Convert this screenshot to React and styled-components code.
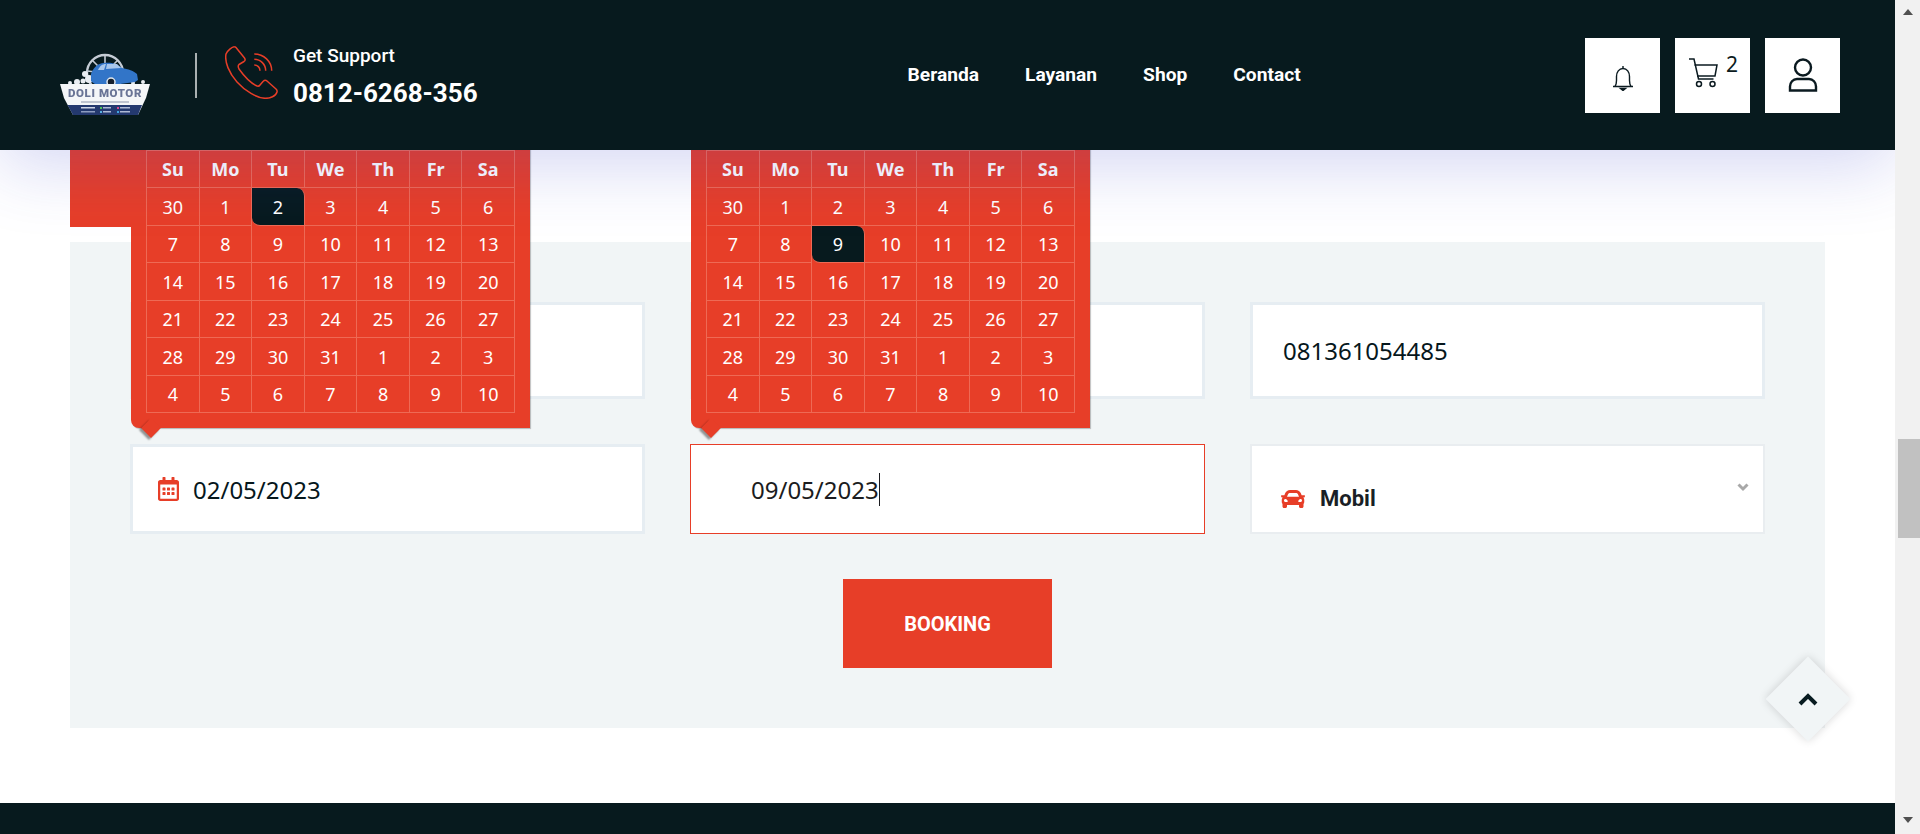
import React from "react";
import styled, { createGlobalStyle } from "styled-components";
import { FaCar, FaRegCalendarAlt } from "react-icons/fa";

const RED = "#e73e28";
const DARK = "#071a1e";
const HEAD_FONT = `Roboto, "Liberation Sans", sans-serif`;
const BODY_FONT = `"Noto Sans", "Open Sans", sans-serif`;

const GlobalStyle = createGlobalStyle`
  html, body {
    margin: 0;
    height: 100%;
    overflow: hidden;
    background: #fff;
  }
`;

const Shell = styled.div`
  display: flex;
  height: 834px;
  overflow: hidden;
`;

const Page = styled.div`
  position: relative;
  flex: 1;
  min-width: 0;
  display: flex;
  flex-direction: column;
  overflow: hidden;
`;

const Header = styled.header`
  position: sticky;
  top: 0;
  z-index: 10;
  flex: none;
  height: 150px;
  display: flex;
  align-items: center;
  padding: 0 55px 0 59px;
  background: ${DARK};
  box-shadow: 0 15px 70px rgba(60, 68, 206, 0.22);
`;

const Logo = styled.svg`
  flex: none;
  width: 91px;
  height: 64px;
  margin-top: 18px;
  filter: blur(0.6px);
`;

const Divider = styled.span`
  flex: none;
  width: 2px;
  height: 45px;
  margin: 0 28px 0 45px;
  background: #a9b0b1;
`;

const Support = styled.div`
  display: flex;
  align-items: center;
  gap: 15px;
  margin-top: -6px;
`;

const PhoneIcon = styled.svg`
  flex: none;
  width: 53px;
  height: 53px;
`;

const SupportText = styled.div`
  display: flex;
  flex-direction: column;
  gap: 12px;
  margin-top: 7px;
  color: #fff;
  font-family: ${HEAD_FONT};
`;

const SupportLabel = styled.span`
  font-size: 19px;
  font-weight: 500;
  line-height: 22px;
`;

const SupportPhone = styled.span`
  font-size: 26px;
  font-weight: 700;
  line-height: 28px;
`;

const Nav = styled.nav`
  display: flex;
  gap: 46px;
  margin-left: 430px;
`;

const NavLink = styled.a`
  color: #fff;
  font-family: ${HEAD_FONT};
  font-size: 19.2px;
  font-weight: 700;
  line-height: 24px;
`;

const Actions = styled.div`
  display: flex;
  gap: 15px;
  margin-left: auto;
`;

const ActionButton = styled.button`
  position: relative;
  width: 75px;
  height: 75px;
  padding: 0;
  border: 0;
  background: #fff;
  display: flex;
  align-items: center;
  justify-content: center;
`;

const BellIcon = styled.svg`
  width: 22px;
  height: 26px;
  margin-top: 5px;
`;

const CartIcon = styled.svg`
  width: 30px;
  height: 30px;
  margin: 0 20px 5px 0;
`;

const CartCount = styled.span`
  position: absolute;
  top: 13px;
  right: 12px;
  color: #0b1a20;
  font-family: ${BODY_FONT};
  font-size: 21px;
  line-height: 27px;
`;

const UserIcon = styled.svg`
  width: 30px;
  height: 34px;
`;

const Main = styled.main`
  flex: none;
  padding: 0 70px;
`;

const Tab = styled.div`
  width: 240px;
  height: 77px;
  margin-bottom: 15px;
  background: ${RED};
`;

const Panel = styled.section`
  padding: 60px;
  background: #f1f5f6;
`;

const FormGrid = styled.div`
  display: grid;
  grid-template-columns: repeat(3, 515px);
  grid-template-rows: 97px 90px;
  gap: 45px;
`;

const Field = styled.div`
  position: relative;
  box-sizing: border-box;
  display: flex;
  align-items: center;
  gap: 14px;
  padding-left: ${(p) => p.$inset || 30}px;
  background: #fff;
  border: ${(p) => (p.$focused ? `1px solid ${RED}` : "3px solid #e6edf2")};
  color: ${(p) => (p.$focused ? "#1b1c20" : "#06171c")};
  font-family: ${BODY_FONT};
  font-size: 24px;
`;

const Caret = styled.span`
  width: 1px;
  height: 33px;
  margin-left: -14px;
  background: #1b1c20;
`;

const SelectField = styled.div`
  position: relative;
  box-sizing: border-box;
  display: flex;
  align-items: center;
  gap: 15px;
  padding: 19px 0 0 29px;
  background: #fff;
  border: 2px solid #e9edf0;
  color: #1a1f26;
  font-family: ${HEAD_FONT};
  font-size: 22px;
  font-weight: 700;
`;

const CarIcon = styled(FaCar)`
  width: 24px;
  height: 24px;
  color: ${RED};
`;

const DateIcon = styled(FaRegCalendarAlt)`
  width: 21px;
  height: 24px;
  color: ${RED};
`;

const SelectChevron = styled.svg`
  position: absolute;
  top: 37px;
  right: 14px;
  width: 12px;
  height: 9px;
`;

const Calendar = styled.div`
  position: absolute;
  left: ${(p) => p.$offset}px;
  bottom: calc(100% + ${(p) => p.$lift}px);
  z-index: 3;
  box-sizing: border-box;
  width: 399px;
  padding: 15px;
  background: ${RED};
  border-bottom-left-radius: 8px;
  box-shadow: 1px 1px 1px rgba(0, 0, 0, 0.25);

  &::after {
    content: "";
    position: absolute;
    left: 13px;
    bottom: -7px;
    width: 14px;
    height: 14px;
    background: ${RED};
    transform: rotate(45deg);
    box-shadow: 0 3px 2px rgba(0, 0, 0, 0.4);
  }
`;

const CalendarGrid = styled.div`
  display: grid;
  grid-template-columns: repeat(7, 1fr);
  grid-auto-rows: 37.5px;
  border-top: 1px solid #ee6a55;
  border-left: 1px solid #ee6a55;
  position: relative;
  z-index: 1;
`;

const DayCell = styled.div`
  box-sizing: border-box;
  display: flex;
  align-items: center;
  justify-content: center;
  padding-top: 1px;
  border-right: 1px solid #ee6a55;
  border-bottom: 1px solid #ee6a55;
  color: #fff;
  font-family: ${BODY_FONT};
  font-size: 18px;
  font-weight: ${(p) => (p.$head ? 700 : 400)};
  background: ${(p) => (p.$selected ? DARK : "transparent")};
  border-top-right-radius: ${(p) => (p.$selected ? "8px" : 0)};
  border-bottom-left-radius: ${(p) => (p.$selected ? "8px" : 0)};
`;

const SubmitRow = styled.div`
  display: flex;
  justify-content: center;
  margin-top: 45px;
`;

const BookingButton = styled.button`
  width: 209px;
  height: 89px;
  border: 0;
  padding: 0;
  background: ${RED};
  color: #fff;
  font-family: ${HEAD_FONT};
  font-size: 20px;
  font-weight: 700;
`;

const Footer = styled.footer`
  flex: 1;
  margin-top: 75px;
  background: ${DARK};
`;

const ToTop = styled.button`
  position: absolute;
  left: 1778px;
  top: 669px;
  z-index: 5;
  width: 60px;
  height: 60px;
  padding: 0;
  border: 0;
  display: flex;
  align-items: center;
  justify-content: center;
  background: #f1f5f6;
  box-shadow: 0 0 10px rgba(0, 0, 0, 0.16);
  transform: rotate(45deg);
`;

const ToTopIcon = styled.svg`
  width: 20px;
  height: 14px;
  transform: rotate(-45deg);
`;

const ScrollRail = styled.div`
  position: relative;
  flex: none;
  width: 25px;
  display: flex;
  flex-direction: column;
  align-items: center;
  justify-content: space-between;
  padding: 9px 0 11px;
  box-sizing: border-box;
  background: #f1f1f1;
`;

const ScrollThumb = styled.div`
  position: absolute;
  top: 439px;
  left: 3px;
  right: 0;
  height: 99px;
  background: #c1c1c1;
`;

const ScrollArrow = styled.span`
  width: 0;
  height: 0;
  border-left: 5px solid transparent;
  border-right: 5px solid transparent;
  ${(p) => (p.$up ? "border-bottom" : "border-top")}: 6px solid #505050;
`;

const WEEK = ["Su", "Mo", "Tu", "We", "Th", "Fr", "Sa"];
const DAYS = [
  30, ...Array.from({ length: 31 }, (_, i) => i + 1),
  ...Array.from({ length: 10 }, (_, i) => i + 1),
];

function DatePopup({ selected, offset, lift }) {
  return (
    <Calendar $offset={offset} $lift={lift}>
      <CalendarGrid>
        {WEEK.map((d) => (
          <DayCell key={d} $head>{d}</DayCell>
        ))}
        {DAYS.map((d, i) => (
          <DayCell key={i} $selected={i === selected}>{d}</DayCell>
        ))}
      </CalendarGrid>
    </Calendar>
  );
}

function BrandLogo() {
  return (
    <Logo viewBox="0 0 91 64">
      <g fill="none" stroke="#c5ccd5" strokeWidth="2.4">
        <circle cx="46" cy="21" r="18" />
        <path d="M46 3v18M33 8l13 13M59 8L46 21M28 19l18 2M64 19l-18 2" strokeWidth="1.6" />
      </g>
      <g fill="#e9edf2">
        <circle cx="26" cy="22" r="3" />
        <circle cx="30" cy="27" r="4" />
        <circle cx="24" cy="29" r="2.5" />
        <circle cx="11" cy="31" r="2" />
        <circle cx="18" cy="30" r="3" />
        <circle cx="74" cy="31" r="2" />
        <circle cx="84" cy="30" r="2" />
      </g>
      <path
        d="M32 22c2-6 6-10 12-11 7-1 14 0 19 5 6 1 12 3 15 6l1 6-3 2-30 4c-5 0-12-2-14-5z"
        fill="#3275c8"
      />
      <path d="M39 18c2-4 4-6 8-6l-2 6zM48 12h10l4 4-15 1z" fill="#a9c8ec" />
      <circle cx="52" cy="30" r="4" fill="#16202c" stroke="#dfe6ee" strokeWidth="1.5" />
      <path d="M1 32h90l-4 14-8 17H14L5 46z" fill="#f4f6f8" />
      <path d="M8.500 53h74.500L79 63H14z" fill="#24396f" />
      <text
        x="46"
        y="45"
        fontFamily={HEAD_FONT}
        fontSize="11.500"
        fontWeight="900"
        textAnchor="middle"
        fill="#6a7596"
        letterSpacing="0.6"
      >
        DOLI MOTOR
      </text>
      <path d="M22 50h48" stroke="#8a93a8" strokeWidth="1" />
      <g>
        <rect x="22" y="55" width="14" height="1.500" fill="#cfd6e6" />
        <rect x="22" y="59" width="14" height="1.500" fill="#8d9cc0" />
        <rect x="41" y="55" width="2" height="2" fill="#4fc25a" />
        <rect x="44" y="55" width="8" height="1.500" fill="#aeb9d4" />
        <rect x="41" y="59" width="2" height="2" fill="#58b0e0" />
        <rect x="44" y="59" width="8" height="1.500" fill="#aeb9d4" />
        <rect x="58" y="55" width="2" height="2" fill="#d9478c" />
        <rect x="61" y="55" width="10" height="1.500" fill="#aeb9d4" />
        <rect x="58" y="59" width="2" height="2" fill="#3fa5e0" />
        <rect x="61" y="59" width="10" height="1.500" fill="#aeb9d4" />
      </g>
    </Logo>
  );
}

function App() {
  return (
    <Shell>
      <GlobalStyle />
      <Page>
        <Header>
          <BrandLogo />
          <Divider />
          <Support>
            <PhoneIcon viewBox="0 0 53 53" fill="none" stroke={RED} strokeWidth="1.500" strokeLinejoin="round">
              <path d="M9.300.8C7.500.5 2 5 1 8c-1.500 8 3 19 11 28 8 9 20 16 28 16.300 5 .2 11-2.300 12-6.300.5-1.500 0-2-1-3l-9-8c-1.500-1.300-2.500-1-4 .5l-3 3.500c-1 1.500-2 1.700-4 .5-5-2.500-12-9.500-17-16.500-1-2-1.500-3 0-4.500l5-3c1.500-1 1.500-2 .5-3.500L11 1.500c-.4-.4-1-.6-1.700-.7z" />
              <path d="M29.300 8c9.500 0 17.400 7.500 17.400 16.700M29.300 13.300c6.300 0 11.400 5 11.400 11.400M29.300 19c3.200 0 5.700 2.500 5.700 5.700" />
            </PhoneIcon>
            <SupportText>
              <SupportLabel>Get Support</SupportLabel>
              <SupportPhone>0812-6268-356</SupportPhone>
            </SupportText>
          </Support>
          <Nav>
            <NavLink>Beranda</NavLink>
            <NavLink>Layanan</NavLink>
            <NavLink>Shop</NavLink>
            <NavLink>Contact</NavLink>
          </Nav>
          <Actions>
            <ActionButton>
              <BellIcon viewBox="0 0 22 26" fill="none" stroke="#0b1a20" strokeWidth="1.400">
                <path d="M1 21.500h20M3 21.500c1-1.500 1.500-3 1.500-6v-4C4.500 7 7 3.500 11 3.500s6.500 3.500 6.500 8v4c0 3 .5 4.500 1.500 6" />
                <path d="M11 1v2.500" />
                <path d="M8.500 23.500h5L11 25.500z" fill="#0b1a20" />
              </BellIcon>
            </ActionButton>
            <ActionButton>
              <CartIcon viewBox="0 0 30 30" fill="none" stroke="#0b1a20" strokeWidth="1.500">
                <path d="M1 1h5l4.500 20h15" />
                <path d="M6.500 7H29l-2 11H9" />
                <circle cx="11" cy="26" r="2.500" />
                <circle cx="24.500" cy="26" r="2.500" />
              </CartIcon>
              <CartCount>2</CartCount>
            </ActionButton>
            <ActionButton>
              <UserIcon viewBox="0 0 30 34" fill="none" stroke="#0b1a20" strokeWidth="2.400">
                <circle cx="15" cy="9.500" r="8" />
                <path d="M2 32.500v-4c0-4 3-7.500 7-7.500h12c4 0 7 3.500 7 7.500v4z" />
              </UserIcon>
            </ActionButton>
          </Actions>
        </Header>
        <Main>
          <Tab />
          <Panel>
            <FormGrid>
              <Field />
              <Field />
              <Field>081361054485</Field>
              <Field $inset={25}>
                <DatePopup selected={2} offset={-2} lift={19} />
                <DateIcon />
                02/05/2023
              </Field>
              <Field $focused $inset={60}>
                <DatePopup selected={9} offset={0} lift={17} />
                09/05/2023
                <Caret />
              </Field>
              <SelectField>
                <CarIcon />
                Mobil
                <SelectChevron viewBox="0 0 12 9" fill="none" stroke="#a8a8a8" strokeWidth="3">
                  <path d="M1.500 1.500L6 6l4.500-4.500" />
                </SelectChevron>
              </SelectField>
            </FormGrid>
            <SubmitRow>
              <BookingButton>BOOKING</BookingButton>
            </SubmitRow>
          </Panel>
        </Main>
        <Footer />
        <ToTop>
          <ToTopIcon viewBox="0 0 20 14" fill="none" stroke="#081b20" strokeWidth="4">
            <path d="M2 12l8-8 8 8" />
          </ToTopIcon>
        </ToTop>
      </Page>
      <ScrollRail>
        <ScrollArrow $up />
        <ScrollThumb />
        <ScrollArrow />
      </ScrollRail>
    </Shell>
  );
}

export default App;
